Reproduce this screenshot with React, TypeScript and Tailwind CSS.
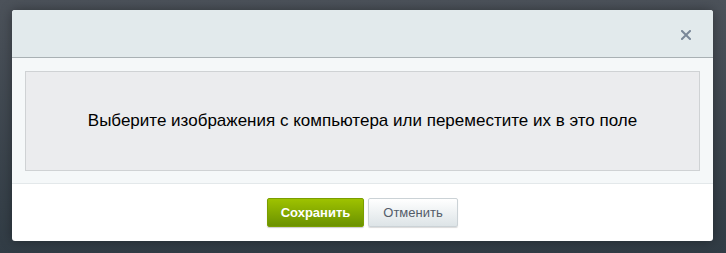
import React from 'react';

const App = () => {
  return (
    <div
      className="w-[726px] h-[253px] overflow-hidden bg-gradient-to-b from-[#4c525a] to-[#313c45] pt-[10px] pl-[12px]"
      style={{ fontFamily: '"Liberation Sans", Arial, sans-serif' }}
    >
      <div className="w-[701px] h-[231px] flex flex-col rounded-[3px] overflow-hidden bg-white shadow-[0_0_12px_rgba(0,0,0,0.35)]">
        {/* шапка */}
        <div className="h-[48px] shrink-0 flex items-center justify-end pr-[22px] bg-[#e2eaec] border-b border-[#a9b1b4]">
          <svg width="10" height="10" viewBox="0 0 10 10" className="mt-[2px]">
            <path d="M1 1 L9 9 M9 1 L1 9" stroke="#7a8898" strokeWidth="2" strokeLinecap="square" />
          </svg>
        </div>

        {/* поле загрузки */}
        <div className="h-[126px] shrink-0 bg-[#f5f8f9] px-[13px] pt-[13px] border-b border-[#e3e8ea]">
          <div className="h-[100px] flex items-center justify-center bg-[#ebecee] border border-[#cfd2d4]">
            <span className="text-[17px] text-black">
              Выберите изображения с компьютера или переместите их в это поле
            </span>
          </div>
        </div>

        {/* кнопки */}
        <div className="flex-1 flex items-start justify-center gap-[4px] pt-[14px]">
          <button className="h-[29px] w-[97px] rounded-[2px] bg-gradient-to-b from-[#9ec200] to-[#6b9200] border border-[#7a9e00] text-white text-[13px] font-bold shadow-[0_1px_1px_rgba(0,0,0,0.2)]">
            Сохранить
          </button>
          <button className="h-[29px] w-[90px] rounded-[2px] bg-gradient-to-b from-[#ffffff] to-[#dde4e7] border border-[#cbd2d6] text-[#535c69] text-[13px] shadow-[0_1px_1px_rgba(0,0,0,0.15)]">
            Отменить
          </button>
        </div>
      </div>
    </div>
  );
};

export default App;
